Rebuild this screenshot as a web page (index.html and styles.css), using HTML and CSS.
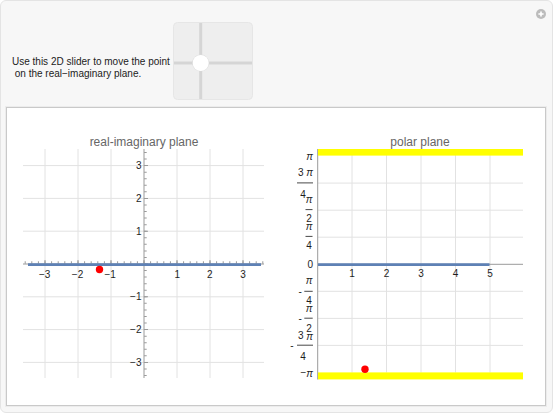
FILE: index.html
```html
<!DOCTYPE html>
<html>
<head>
<meta charset="utf-8">
<link rel="stylesheet" href="styles.css">
</head>
<body>
<div class="app">
  <div class="controls">
    <p class="caption">Use this 2D slider to move the point<br>&nbsp;on the real−imaginary plane.</p>
    <svg class="slider2d" width="80" height="78" viewBox="0 0 80 78">
      <rect x="0.5" y="0.5" width="79" height="77" rx="4" fill="#eeeeee" stroke="#e6e6e6"/>
      <line x1="27.7" y1="1" x2="27.7" y2="77" stroke="#d5d5d5" stroke-width="3"/>
      <line x1="1" y1="41" x2="79" y2="41" stroke="#d5d5d5" stroke-width="3"/>
      <circle cx="27.7" cy="41" r="8.5" fill="#dcdcdc"/>
      <circle cx="27.7" cy="41" r="8" fill="#ffffff"/>
    </svg>
  </div>
  <button class="plus" aria-label="more">
    <svg width="10" height="10" viewBox="0 0 10 10">
      <circle cx="5" cy="5" r="5" fill="#bcbcbc"/>
      <path d="M5 2.4v5.2M2.4 5h5.2" stroke="#fff" stroke-width="1.6"/>
    </svg>
  </button>
  <div class="output">
    <svg class="plot" width="269" height="297" viewBox="7 108 269 297">
      <g stroke="#e2e2e2" stroke-width="1">
        <path d="M45 149V378M78 149V378M111 149V378M177 149V378M210 149V378M243 149V378"/>
        <path d="M23 165.6H264M23 198.4H264M23 231.2H264M23 296.8H264M23 329.6H264M23 362.4H264"/>
      </g>
      <g stroke="#9a9a9a">
        <line x1="23" y1="264" x2="264" y2="264" stroke-width="1"/>
        <line x1="144" y1="149" x2="144" y2="378" stroke-width="1"/>
        <line x1="24.7" y1="262.5" x2="264" y2="262.5" stroke-width="2.6" stroke-dasharray="1 5.6"/>
        <line x1="44.5" y1="262" x2="264" y2="262" stroke-width="4" stroke-dasharray="1 32"/>
        <line x1="145.4" y1="151.98" x2="145.4" y2="378" stroke-width="2.6" stroke-dasharray="1 5.56"/>
        <line x1="146" y1="165.1" x2="146" y2="378" stroke-width="4" stroke-dasharray="1 31.8"/>
      </g>
      <line x1="28" y1="264.6" x2="261" y2="264.6" stroke="#5e81b5" stroke-width="2.6"/>
      <circle cx="99.5" cy="269.5" r="3.7" fill="#ff0000"/>
      <g class="ticklbl" text-anchor="middle">
        <text x="44.7" y="274">−3</text>
        <text x="77.5" y="274">−2</text>
        <text x="110.2" y="274">−1</text>
        <text x="177.3" y="274">1</text>
        <text x="209.8" y="274">2</text>
        <text x="243" y="274">3</text>
      </g>
      <g class="ticklbl" text-anchor="end">
        <text x="141.5" y="165.6">3</text>
        <text x="141.5" y="198.4">2</text>
        <text x="141.5" y="231.2">1</text>
        <text x="141.5" y="296.8">−1</text>
        <text x="141.5" y="329.6">−2</text>
        <text x="141.5" y="362.4">−3</text>
      </g>
      <text class="title" x="144" y="142.3" text-anchor="middle">real-imaginary plane</text>
    </svg>
    <svg class="plot" width="269" height="297" viewBox="276 108 269 297">
      <g stroke="#e2e2e2" stroke-width="1">
        <path d="M352 155V372.5M386.5 155V372.5M421 155V372.5M455.5 155V372.5M490 155V372.5"/>
        <path d="M318 183.1H523M318 210.2H523M318 237.2H523M318 291.3H523M318 318.4H523M318 345.4H523"/>
      </g>
      <g stroke="#9a9a9a" stroke-width="1">
        <line x1="318" y1="264.3" x2="523" y2="264.3"/>
        <line x1="317.7" y1="149" x2="317.7" y2="379.5"/>
      </g>
      <rect x="318" y="149" width="205" height="6.6" fill="#ffff00"/>
      <rect x="318" y="372.4" width="205" height="7" fill="#ffff00"/>
      <line x1="318" y1="264.6" x2="489.5" y2="264.6" stroke="#5e81b5" stroke-width="2.6"/>
      <circle cx="365" cy="369.3" r="3.7" fill="#ff0000"/>
      <g class="ticklbl" text-anchor="middle">
        <text x="352" y="273">1</text>
        <text x="386.5" y="273">2</text>
        <text x="421" y="273">3</text>
        <text x="455.5" y="273">4</text>
        <text x="490" y="273">5</text>
      </g>
      <g class="ticklbl">
        <text x="313" y="264.3" text-anchor="end">0</text>
        <text class="pi" x="313" y="156.8" text-anchor="end">π</text>
        <text x="313" y="172" text-anchor="end">3 <tspan class="pi">π</tspan></text>
        <text x="303" y="194.5" text-anchor="middle">4</text>
        <text class="pi" x="309" y="199.6" text-anchor="middle">π</text>
        <text x="309" y="218.8" text-anchor="middle">2</text>
        <text class="pi" x="309" y="226.7" text-anchor="middle">π</text>
        <text x="309" y="245.8" text-anchor="middle">4</text>
        <text class="pi" x="309" y="280.8" text-anchor="middle">π</text>
        <text x="300.2" y="291.3" text-anchor="middle">-</text>
        <text x="309" y="300.8" text-anchor="middle">4</text>
        <text class="pi" x="309" y="308" text-anchor="middle">π</text>
        <text x="300.2" y="318.4" text-anchor="middle">-</text>
        <text x="309" y="328" text-anchor="middle">2</text>
        <text x="313" y="335.5" text-anchor="end">3 <tspan class="pi">π</tspan></text>
        <text x="291.8" y="345.4" text-anchor="middle">-</text>
        <text x="303" y="356" text-anchor="middle">4</text>
        <text x="313" y="372.5" text-anchor="end">−<tspan class="pi">π</tspan></text>
      </g>
      <g stroke="#333" stroke-width="0.9">
        <path d="M297 182.9H313M305.5 209.6H312.5M305.5 236.4H312.5M304.3 291.3H312.7M304.3 318.2H312.7M297 345.2H313"/>
      </g>
      <text class="title" x="420" y="142.3" text-anchor="middle">polar plane</text>
    </svg>
  </div>
</div>
</body>
</html>
```

FILE: styles.css
```css
* {
  box-sizing: border-box;
}

html, body {
  margin: 0;
  padding: 0;
  background: #ffffff;
}

.app {
  position: relative;
  width: 553px;
  height: 413px;
  background: #f7f7f7;
  border: 1px solid #e4e4e4;
  border-radius: 6px;
  font-family: "Liberation Sans", Arial, sans-serif;
}

.controls {
  display: flex;
  align-items: flex-start;
  height: 106px;
  padding: 21px 0 0 11px;
}

.caption {
  margin: 34px 0 0 0;
  width: 161px;
  font-size: 10px;
  line-height: 12px;
  color: #222222;
  white-space: nowrap;
}

.slider2d {
  display: block;
  flex: none;
}

.plus {
  position: absolute;
  top: 8px;
  right: 6px;
  padding: 0;
  margin: 0;
  border: 0;
  background: none;
  width: 10px;
  height: 10px;
  line-height: 0;
}

.output {
  display: flex;
  margin: 0 6px 0 5px;
  height: 299px;
  background: #ffffff;
  border: 1px solid #c9c9c9;
  box-shadow: 0 0 0 1px #ececec;
}

.plot {
  display: block;
  flex: none;
}

.ticklbl text {
  font-family: "Liberation Sans", Arial, sans-serif;
  font-size: 10px;
  fill: #1e1e1e;
  dominant-baseline: central;
}

.pi {
  font-style: italic;
  font-family: "Liberation Sans", Arial, sans-serif;
  font-size: 10px;
}

.title {
  font-family: "Liberation Sans", Arial, sans-serif;
  font-size: 12px;
  fill: #666666;
  dominant-baseline: central;
}
```
